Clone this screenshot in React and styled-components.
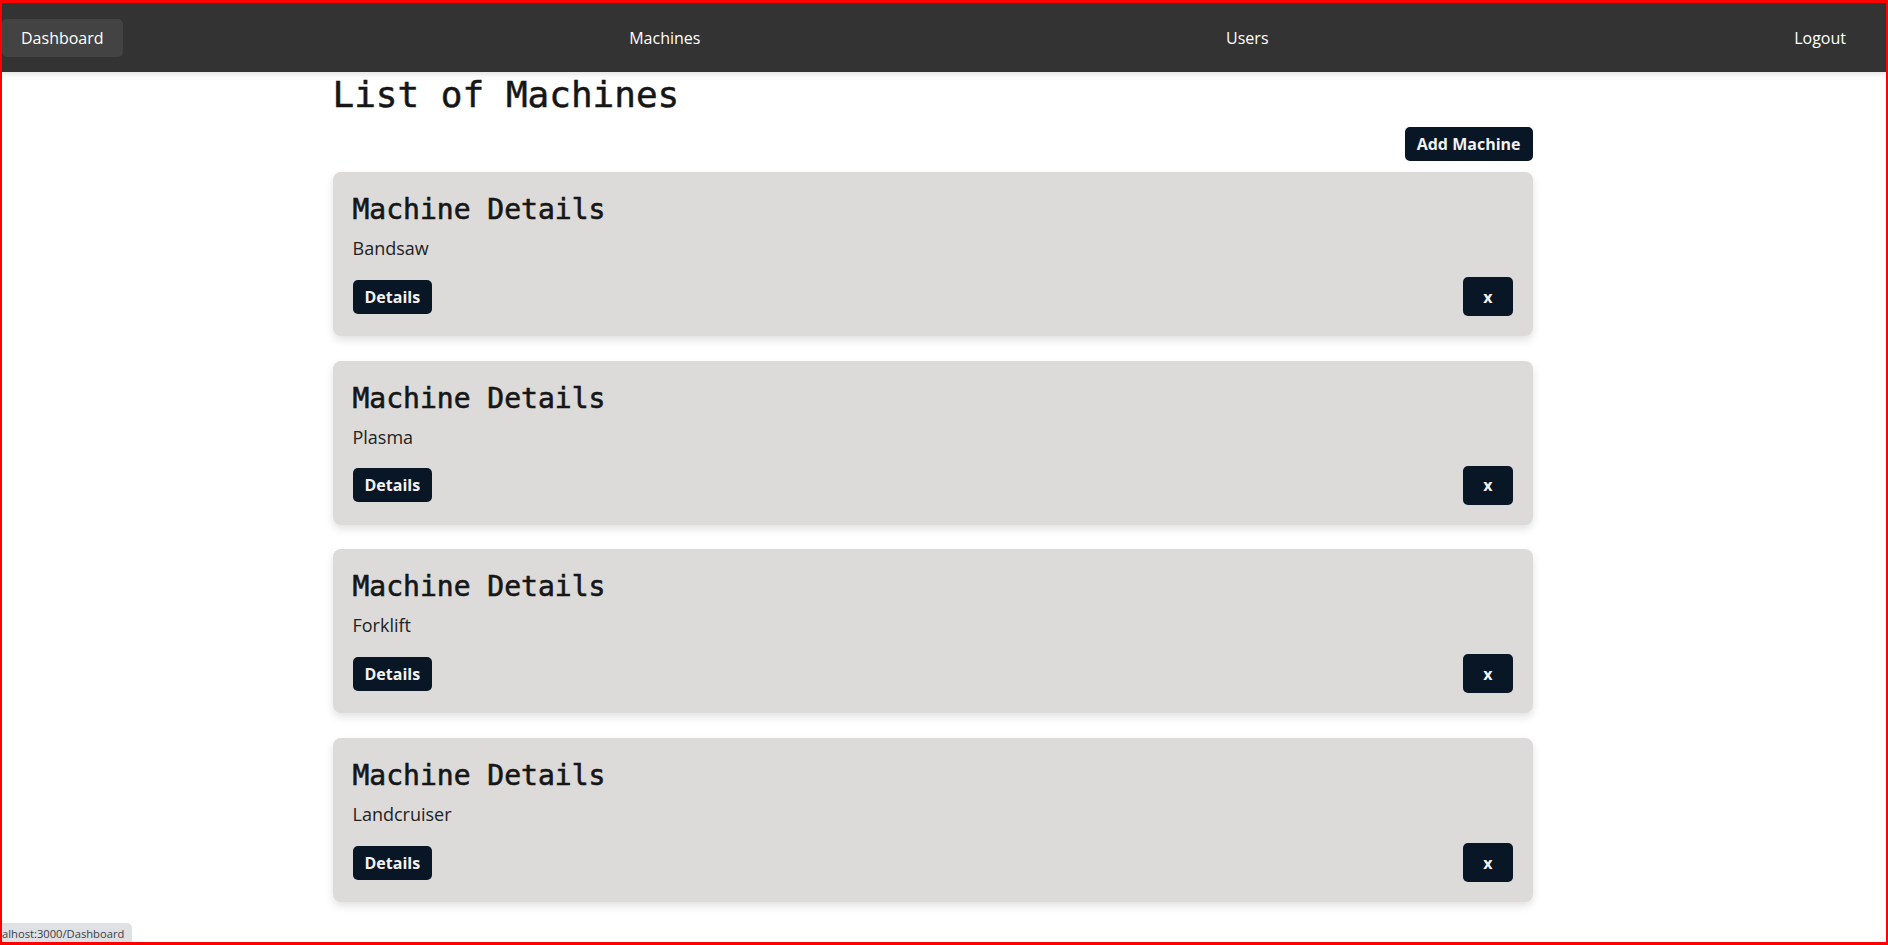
import React from "react";
import styled, { createGlobalStyle } from "styled-components";

const GlobalStyle = createGlobalStyle`
  html, body {
    margin: 0;
    padding: 0;
    background: #ffffff;
    font-family: "Open Sans", "Noto Sans", sans-serif;
    overflow: hidden;
  }
  * { box-sizing: border-box; }
`;

const Page = styled.div`
  min-height: 100vh;
  background: #ffffff;
`;

const NavBar = styled.nav`
  height: 72px;
  padding: 4px 23px 0 2px;
  background: #333333;
  display: flex;
  align-items: center;
  justify-content: space-between;
  box-shadow: 0 2px 6px rgba(0, 0, 0, 0.12);
`;

const NavLink = styled.a`
  display: block;
  padding: 8px 19px;
  border-radius: 5px;
  background: ${(p) => (p.$active ? "#434343" : "transparent")};
  color: #ffffff;
  font-family: "Open Sans", sans-serif;
  font-size: 16px;
  line-height: 22px;
  text-decoration: none;
  cursor: pointer;
`;

const Main = styled.main`
  padding-right: 23px;
`;

const Container = styled.div`
  width: 1200px;
  margin: 0 auto;
`;

const Heading = styled.h1`
  margin: 2px 0 0;
  font-family: "DejaVu Sans Mono", "Liberation Mono", monospace;
  font-size: 36px;
  font-weight: normal;
  line-height: normal;
  color: #161616;
  -webkit-text-stroke: 0.5px #161616;
`;

const Toolbar = styled.div`
  display: flex;
  justify-content: flex-end;
  margin: 12px 0 11px;
`;

const Button = styled.button`
  border: none;
  border-radius: 5px;
  background: #081626;
  color: #f2f2f2;
  font-family: "Open Sans", sans-serif;
  font-weight: 700;
  font-size: 16px;
  line-height: 22px;
  padding: ${(p) => (p.$square ? "8.5px 20px" : "6px 12px")};
  cursor: pointer;
`;

const CardList = styled.div`
  display: flex;
  flex-direction: column;
  gap: 24.7px;
`;

const Card = styled.section`
  background: #dcdbda;
  border-radius: 8px;
  padding: 21px 20px 20px;
  box-shadow: 0 4px 8px rgba(0, 0, 0, 0.12);
`;

const CardTitle = styled.h2`
  margin: 0;
  font-family: "DejaVu Sans Mono", "Liberation Mono", monospace;
  font-size: 28px;
  font-weight: normal;
  line-height: normal;
  color: #161616;
  -webkit-text-stroke: 0.6px #161616;
`;

const CardText = styled.p`
  margin: 10px 0 0;
  font-family: "Open Sans", sans-serif;
  font-size: 18px;
  line-height: normal;
  color: #222222;
`;

const CardActions = styled.div`
  margin-top: 17px;
  display: flex;
  align-items: center;
  justify-content: space-between;
`;

const StatusBubble = styled.div`
  position: fixed;
  left: 0;
  bottom: 0;
  height: 22px;
  padding: 3px 8px 0 2px;
  background: #dfe1e5;
  border-top-right-radius: 5px;
  font-family: "Open Sans", sans-serif;
  font-size: 11.2px;
  line-height: 16px;
  color: #3c4043;
  z-index: 5;
`;

const Frame = styled.div`
  position: fixed;
  inset: 0;
  border-style: solid;
  border-color: #ff0000;
  border-width: 3px 2px 3px 2px;
  pointer-events: none;
  z-index: 10;
`;

const machines = ["Bandsaw", "Plasma", "Forklift", "Landcruiser"];

export default function App() {
  return (
    <Page>
      <GlobalStyle />
      <NavBar>
        <NavLink $active>Dashboard</NavLink>
        <NavLink>Machines</NavLink>
        <NavLink>Users</NavLink>
        <NavLink>Logout</NavLink>
      </NavBar>
      <Main>
        <Container>
          <Heading>List of Machines</Heading>
          <Toolbar>
            <Button>Add Machine</Button>
          </Toolbar>
          <CardList>
            {machines.map((m) => (
              <Card key={m}>
                <CardTitle>Machine Details</CardTitle>
                <CardText>{m}</CardText>
                <CardActions>
                  <Button>Details</Button>
                  <Button $square>x</Button>
                </CardActions>
              </Card>
            ))}
          </CardList>
        </Container>
      </Main>
      <StatusBubble>alhost:3000/Dashboard</StatusBubble>
      <Frame />
    </Page>
  );
}
